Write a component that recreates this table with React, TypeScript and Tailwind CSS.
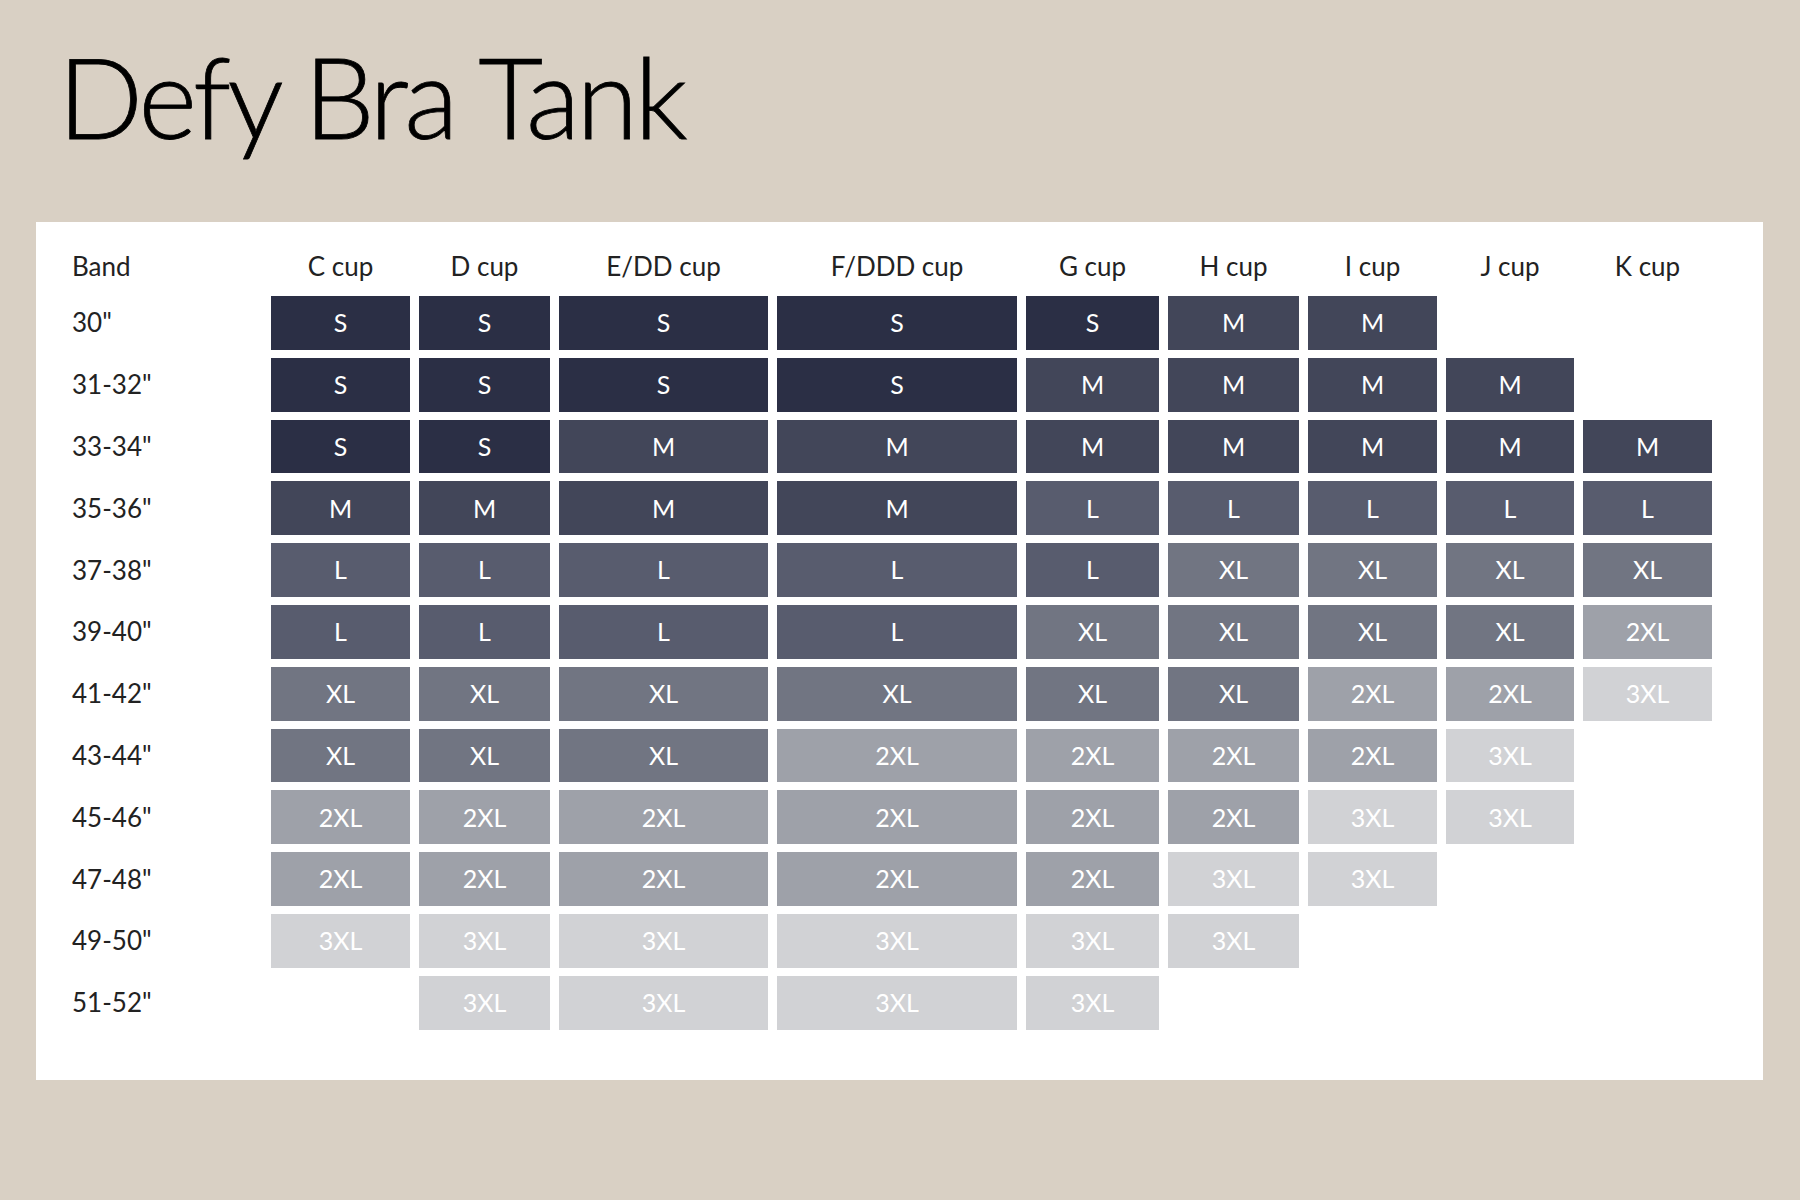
const cups = ['C cup', 'D cup', 'E/DD cup', 'F/DDD cup', 'G cup', 'H cup', 'I cup', 'J cup', 'K cup'];

const rows: { band: string; sizes: string[] }[] = [
  { band: '30"', sizes: ['S', 'S', 'S', 'S', 'S', 'M', 'M', '', ''] },
  { band: '31-32"', sizes: ['S', 'S', 'S', 'S', 'M', 'M', 'M', 'M', ''] },
  { band: '33-34"', sizes: ['S', 'S', 'M', 'M', 'M', 'M', 'M', 'M', 'M'] },
  { band: '35-36"', sizes: ['M', 'M', 'M', 'M', 'L', 'L', 'L', 'L', 'L'] },
  { band: '37-38"', sizes: ['L', 'L', 'L', 'L', 'L', 'XL', 'XL', 'XL', 'XL'] },
  { band: '39-40"', sizes: ['L', 'L', 'L', 'L', 'XL', 'XL', 'XL', 'XL', '2XL'] },
  { band: '41-42"', sizes: ['XL', 'XL', 'XL', 'XL', 'XL', 'XL', '2XL', '2XL', '3XL'] },
  { band: '43-44"', sizes: ['XL', 'XL', 'XL', '2XL', '2XL', '2XL', '2XL', '3XL', ''] },
  { band: '45-46"', sizes: ['2XL', '2XL', '2XL', '2XL', '2XL', '2XL', '3XL', '3XL', ''] },
  { band: '47-48"', sizes: ['2XL', '2XL', '2XL', '2XL', '2XL', '3XL', '3XL', '', ''] },
  { band: '49-50"', sizes: ['3XL', '3XL', '3XL', '3XL', '3XL', '3XL', '', '', ''] },
  { band: '51-52"', sizes: ['', '3XL', '3XL', '3XL', '3XL', '', '', '', ''] },
];

const sizeColor: Record<string, string> = {
  S: 'bg-[#2b2f45]',
  M: 'bg-[#424659]',
  L: 'bg-[#585c6e]',
  XL: 'bg-[#717582]',
  '2XL': 'bg-[#9ea1a9]',
  '3XL': 'bg-[#d1d2d5]',
};

export default function App() {
  return (
    <div className="w-[1800px] h-[1200px] bg-[#d9d0c4] font-['Lato','Liberation_Sans',sans-serif] overflow-hidden">
      <h1 className="pl-[58px] pt-[40px] h-[222px] text-[112px] leading-none font-light text-black tracking-[-3.7px] [-webkit-text-stroke:0.8px_black] font-['Lato','Liberation_Sans',sans-serif]">
        Defy Bra Tank
      </h1>

      <div className="ml-[36px] w-[1727px] bg-white pl-[36px] pt-[22px] pb-[50px]">
        <div className="grid grid-cols-[190px_139px_131px_209px_240px_133px_131px_129px_128px_129px] auto-rows-[53.8px] grid-rows-[44px] gap-x-[9px] gap-y-[8px]">
          <div className="flex items-center text-[26px] text-[#222]">Band</div>
          {cups.map((c) => (
            <div key={c} className="flex items-center justify-center text-[26px] text-[#222]">
              {c}
            </div>
          ))}

          {rows.map((r) => (
            <>
              <div key={r.band} className="flex items-center text-[26px] text-[#222]">
                {r.band}
              </div>
              {r.sizes.map((s, i) =>
                s ? (
                  <div
                    key={r.band + i}
                    className={`flex items-center justify-center text-[25px] text-white ${sizeColor[s]}`}
                  >
                    {s}
                  </div>
                ) : (
                  <div key={r.band + i} />
                )
              )}
            </>
          ))}
        </div>
      </div>
    </div>
  );
}
